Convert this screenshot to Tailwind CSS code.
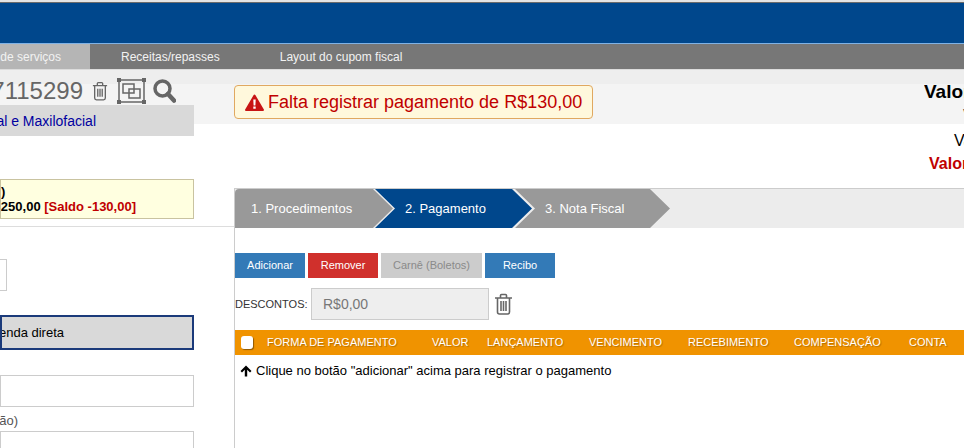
<!DOCTYPE html>
<html lang="en">
<head>
    <meta charset="UTF-8">
    <title>Pagamento</title>
    <script src="https://cdn.jsdelivr.net/npm/@tailwindcss/browser@4"></script>
</head>
<body class="h-[448px] w-[964px] overflow-hidden bg-white font-['Liberation_Sans',Arial,sans-serif] text-black">
    <!-- Top bars -->
    <div class="h-[2px] bg-[#e4e4e4]"></div>
    <div class="h-[1px] bg-[#6b6b6b]"></div>
    <div class="h-[40px] bg-[#00478c]"></div>
    <div class="flex h-[27px] border-t border-b border-t-[#7fb2e5] border-b-[#dcdcdc] bg-[#777777] text-[12px] text-[#f2f2f2]">
        <div class="flex w-[90px] items-center justify-end overflow-hidden whitespace-nowrap bg-[#b5b5b5] pr-[29px]">de serviços</div>
        <div class="flex items-center pr-[30px] pl-[31px]">Receitas/repasses</div>
        <div class="flex items-center px-[30px]">Layout do cupom fiscal</div>
    </div>

    <!-- Main area -->
    <div class="flex h-[378px] bg-[linear-gradient(#eeeeee_14px,#f4f4f4_14px,#f4f4f4_54px,#ffffff_54px)]">
        <!-- Left column -->
        <div class="w-[234px] shrink-0">
            <div class="flex h-[35px] w-[194px] items-center justify-end overflow-hidden whitespace-nowrap pt-[6px] pr-[18px] text-[#666666]">
                <span class="text-[24px] leading-[29px]">7115299</span>
                <svg class="ml-[9px] h-[22px] w-[16px] shrink-0" viewBox="0 0 18 22" fill="none" stroke="#666666" stroke-width="1.5">
                    <path d="M1 5h16M6 5V2.5A1 1 0 0 1 7 1.5h4a1 1 0 0 1 1 1V5M3 5v14a2 2 0 0 0 2 2h8a2 2 0 0 0 2-2V5M6.500 8.500v9M9 8.500v9M11.500 8.500v9"/>
                </svg>
                <svg class="ml-[9px] h-[26px] w-[29px] shrink-0" viewBox="0 0 29 26" fill="none" stroke="#666666" stroke-width="1.500">
                    <path d="M2 2h25v22H2z"/>
                    <path d="M6 6h11v9H6zM12 11h11v9H12z"/>
                    <path fill="#666666" stroke="none" d="M0 0h4v4H0zM25 0h4v4h-4zM0 22h4v4H0zM25 22h4v4h-4z"/>
                </svg>
                <svg class="ml-[7px] h-[24px] w-[23px] shrink-0" viewBox="0 0 23 24" fill="none" stroke="#666666">
                    <circle cx="9.500" cy="9.500" r="7.500" stroke-width="3.500"/>
                    <path d="M15 15l6 6.500" stroke-width="4.500" stroke-linecap="round"/>
                </svg>
            </div>
            <div class="flex h-[31px] w-[194px] items-center justify-end overflow-hidden whitespace-nowrap bg-[#d9d9d9] pt-[1px] pr-[98px] text-[14px] text-[#0000a0]">al e Maxilofacial</div>

            <div class="mt-[43px] flex h-[40px] w-[194px] flex-col items-end justify-center overflow-hidden whitespace-nowrap border border-[#c9c3a0] bg-[#ffffe0] pr-[57px] text-[13px] leading-[15px] font-bold">
                <div class="-mt-[1px] w-[135px]">)</div>
                <div class="flex w-[135px] justify-end">250,00&nbsp;<span class="text-[#c00000]">[Saldo -130,00]</span></div>
            </div>
            <div class="mt-[7px] border-t border-[#dddddd]"></div>

            <div class="mt-[32px] h-[32px] w-[7px] border border-l-0 border-[#cccccc]"></div>

            <div class="mt-[24px] flex h-[35px] w-[194px] items-center justify-end overflow-hidden whitespace-nowrap border-2 border-[#1b3a7a] bg-[#d9d9d9] pr-[128px] text-[13px]">enda direta</div>

            <div class="mt-[25px] h-[32px] w-[194px] border border-[#cccccc]"></div>
            <div class="mt-[3px] flex h-[21px] w-[18px] justify-end overflow-hidden text-[13px] leading-[21px] whitespace-nowrap text-[#555555]">ção)</div>
            <div class="h-[32px] w-[194px] border border-[#cccccc]"></div>
        </div>

        <!-- Right column -->
        <div class="min-w-0 flex-1">
            <div class="flex h-[118px] overflow-hidden">
                <div class="mt-[15px] flex h-[34px] w-[359px] shrink-0 items-center rounded border border-[#e0a860] bg-[#fff8dc] pl-[10px] text-[18px] whitespace-nowrap text-[#c00000]">
                    <svg class="mr-[4px] h-[17px] w-[19px] shrink-0" viewBox="0 0 19 17">
                        <path fill="#c81414" stroke="#c81414" stroke-linejoin="round" stroke-width="2" d="M9.500 1.500L18 16H1z"/>
                        <path fill="#ffffff" d="M8.300 5.500h2.400l-.3 6h-1.800zM8.300 12.500h2.400v2.200H8.300z"/>
                    </svg>
                    Falta registrar pagamento de R$130,00
                </div>
                <div class="ml-[331px] w-[40px] shrink-0 overflow-hidden whitespace-nowrap">
                    <div class="mt-[10px] h-[24px] text-[19px] leading-[24px] font-bold">Valor total</div>
                    <div class="h-[24px] pl-[39px] text-[16px] leading-[24px] text-[#555555]">Valor</div>
                    <div class="mt-[1px] h-[24px] pl-[30px] text-[16px] leading-[24px]">Valor</div>
                    <div class="h-[22px] pl-[5px] text-[16px] leading-[22px] font-bold text-[#c00000]">Valor</div>
                </div>
            </div>

            <div class="h-[260px] border-l border-[#cccccc]">
                <!-- Steps -->
                <div class="flex h-[40px] border-t border-[#cccccc] bg-[#ececec] text-[13px] whitespace-nowrap text-white">
                    <div class="flex h-[39px] w-[158px] items-center rounded-tl bg-[#999999] pl-[16px] [clip-path:polygon(0_0,138px_0,158px_50%,138px_100%,0_100%)]">1. Procedimentos</div>
                    <div class="-ml-[18px] flex h-[39px] w-[157px] items-center bg-[#00478c] pl-[30px] [clip-path:polygon(0_0,137px_0,157px_50%,137px_100%,0_100%,20px_50%)]">2. Pagamento</div>
                    <div class="-ml-[17px] flex h-[39px] w-[155px] items-center bg-[#999999] pl-[30px] [clip-path:polygon(0_0,135px_0,155px_50%,135px_100%,0_100%,20px_50%)]">3. Nota Fiscal</div>
                </div>

                <!-- Buttons -->
                <div class="mt-[25px] flex gap-[3px] text-[11px] text-white">
                    <div class="flex h-[25px] w-[70px] items-center justify-center bg-[#337ab7]">Adicionar</div>
                    <div class="flex h-[25px] w-[70px] items-center justify-center bg-[#d0302c]">Remover</div>
                    <div class="flex h-[25px] w-[101px] items-center justify-center bg-[#cccccc] text-[#8a8a8a]">Carnê (Boletos)</div>
                    <div class="flex h-[25px] w-[70px] items-center justify-center bg-[#337ab7]">Recibo</div>
                </div>

                <!-- Descontos -->
                <div class="mt-[10px] flex h-[32px] items-center text-[11px] text-[#333333]">
                    <span class="w-[76px]">DESCONTOS:</span>
                    <div class="flex h-[32px] w-[178px] items-center border border-[#cccccc] bg-[#eeeeee] pl-[11px] text-[14px] text-[#777777]">R$0,00</div>
                    <svg class="ml-[6px] h-[22px] w-[17px] shrink-0" viewBox="0 0 17 22" fill="none" stroke="#666666" stroke-width="1.600">
                        <path d="M0 5h17M5.500 5V2.500A1 1 0 0 1 6.500 1.500h4a1 1 0 0 1 1 1V5M2.500 5v14a2 2 0 0 0 2 2h8a2 2 0 0 0 2-2V5M6 8v10M8.500 8v10M11 8v10"/>
                    </svg>
                </div>

                <!-- Table header -->
                <div class="mt-[10px] flex h-[25px] items-center bg-[#f09300] text-[11px] whitespace-nowrap text-white [text-shadow:1px_1px_1px_rgba(0,0,0,0.25)]">
                    <div class="flex w-[32px] justify-center pr-[8px]"><div class="h-[13px] w-[12px] rounded-[3px] bg-white shadow-[1px_1px_1px_rgba(0,0,0,0.4)]"></div></div>
                    <div class="w-[165px]">FORMA DE PAGAMENTO</div>
                    <div class="w-[55px]">VALOR</div>
                    <div class="w-[102px]">LANÇAMENTO</div>
                    <div class="w-[99px]">VENCIMENTO</div>
                    <div class="w-[106px]">RECEBIMENTO</div>
                    <div class="w-[115px]">COMPENSAÇÃO</div>
                    <div>CONTA</div>
                </div>

                <!-- Empty row -->
                <div class="mt-[6px] flex items-center pl-[5px] text-[13px] whitespace-nowrap">
                    <svg class="mr-[4px] h-[12px] w-[12px] shrink-0" viewBox="0 0 12 12">
                        <path d="M6 .500L11.500 6 10 7.500 7.200 4.700V11.500H4.800V4.700L2 7.500.500 6z"/>
                    </svg>
                    Clique no botão "adicionar" acima para registrar o pagamento
                </div>
            </div>
        </div>
    </div>
</body>
</html>
